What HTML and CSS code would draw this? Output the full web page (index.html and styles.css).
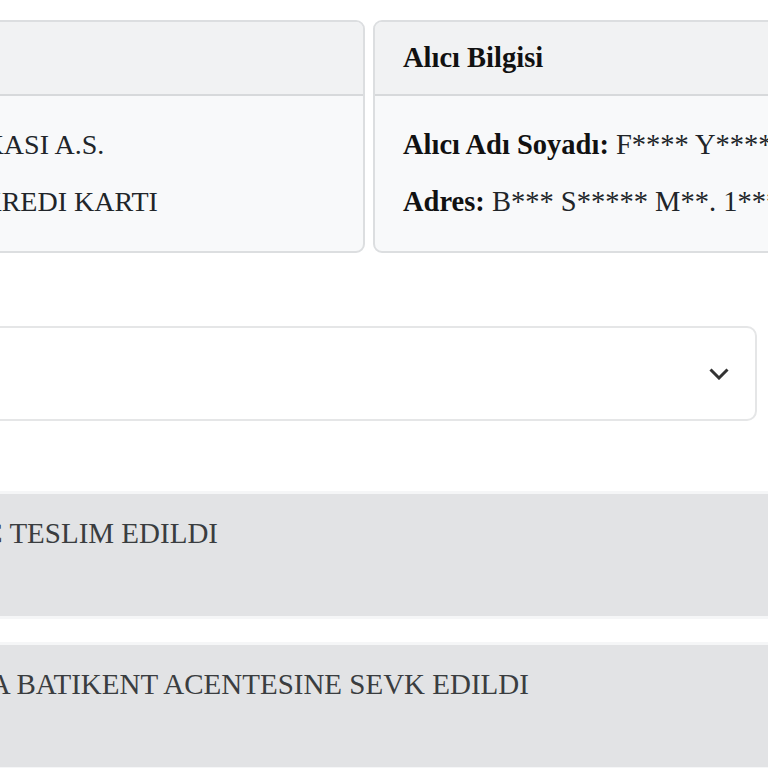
FILE: index.html
```html
<!DOCTYPE html>
<html lang="tr">

<head>
    <meta charset="UTF-8">
    <meta name="viewport" content="width=device-width, initial-scale=1.0">
    <title>Sipariş Detayı</title>
    <link rel="stylesheet" href="styles.css">
</head>

<body>
    <div class="page">
        <!-- odeme ve alici kartlari -->
        <div class="cards">
            <div class="card card-pay">
                <div class="card-header">Ödeme Bilgisi</div>
                <div class="card-body">
                    <p><b>Banka:</b> TEB BANKASI A.S.</p>
                    <p><b>Ödeme Yöntemi:</b> KREDI KARTI</p>
                </div>
            </div>
            <div class="card card-buyer">
                <div class="card-header">Alıcı Bilgisi</div>
                <div class="card-body">
                    <p><b>Alıcı Adı Soyadı:</b> F**** Y*****</p>
                    <p><b>Adres:</b> B*** S***** M**. 1*** S*. N*:1</p>
                </div>
            </div>
        </div>

        <!-- kargo hareketleri -->
        <div class="panel">
            <span class="panel-title">Kargo Hareketleri</span>
            <svg class="chevron" width="20" height="12" viewBox="0 0 20 12">
                <path d="M1.5 1.5l8.5 8.5 8.5-8.5" fill="none" stroke="#333" stroke-width="3" />
            </svg>
        </div>

        <div class="moves">
            <div class="move">KARGO ILE ARAC TESLIM EDILDI</div>
            <div class="move">KARGO - ANKARA BATIKENT ACENTESINE SEVK EDILDI</div>
        </div>
    </div>
</body>

</html>
```

FILE: styles.css
```css
html,
body {
    overflow: hidden;
}

body {
    margin: 0;
    background-color: #fff;
    color: #212529;
    font-family: "Liberation Serif", "Times New Roman", serif;
    font-size: 28px;
    line-height: 42px;
}

.page {
    margin-left: -259px;
    padding-top: 20px;
}

.cards {
    display: flex;
    gap: 8px;
}

.card {
    flex: none;
    box-sizing: border-box;
    border: 2px solid #dcdee0;
    border-radius: 9px;
    background-color: #f8f9fa;
    overflow: hidden;
}

.card-pay {
    width: 624px;
}

.card-buyer {
    width: 640px;
    font-size: 28.5px;
}

.card-header {
    padding: 15px 28px;
    background-color: #f1f2f3;
    border-bottom: 2px solid #d7d9db;
    font-weight: bold;
    color: #111;
}

.card-body {
    padding: 28px;
}

.card-body p {
    margin: 0 0 15px;
    white-space: nowrap;
}

.card-body p:last-child {
    margin-bottom: 0;
}

.card-body b {
    color: #111;
}

.panel {
    width: 1016px;
    height: 95px;
    box-sizing: border-box;
    margin-top: 73px;
    padding: 0 26px 0 35px;
    display: flex;
    align-items: center;
    justify-content: space-between;
    border: 2px solid #e5e6e7;
    border-radius: 10px;
    background-color: #fff;
}

.panel-title {
    color: #212529;
}

.chevron {
    display: block;
}

.moves {
    width: 1100px;
    margin-top: 73px;
}

.move {
    box-sizing: border-box;
    min-height: 122px;
    padding: 18px 20px;
    margin-bottom: 29px;
    background-color: #e2e3e5;
    box-shadow: 0 0 0 3px #f5f6f7;
    color: #3a3d40;
    font-size: 29px;
    white-space: nowrap;
}
```
